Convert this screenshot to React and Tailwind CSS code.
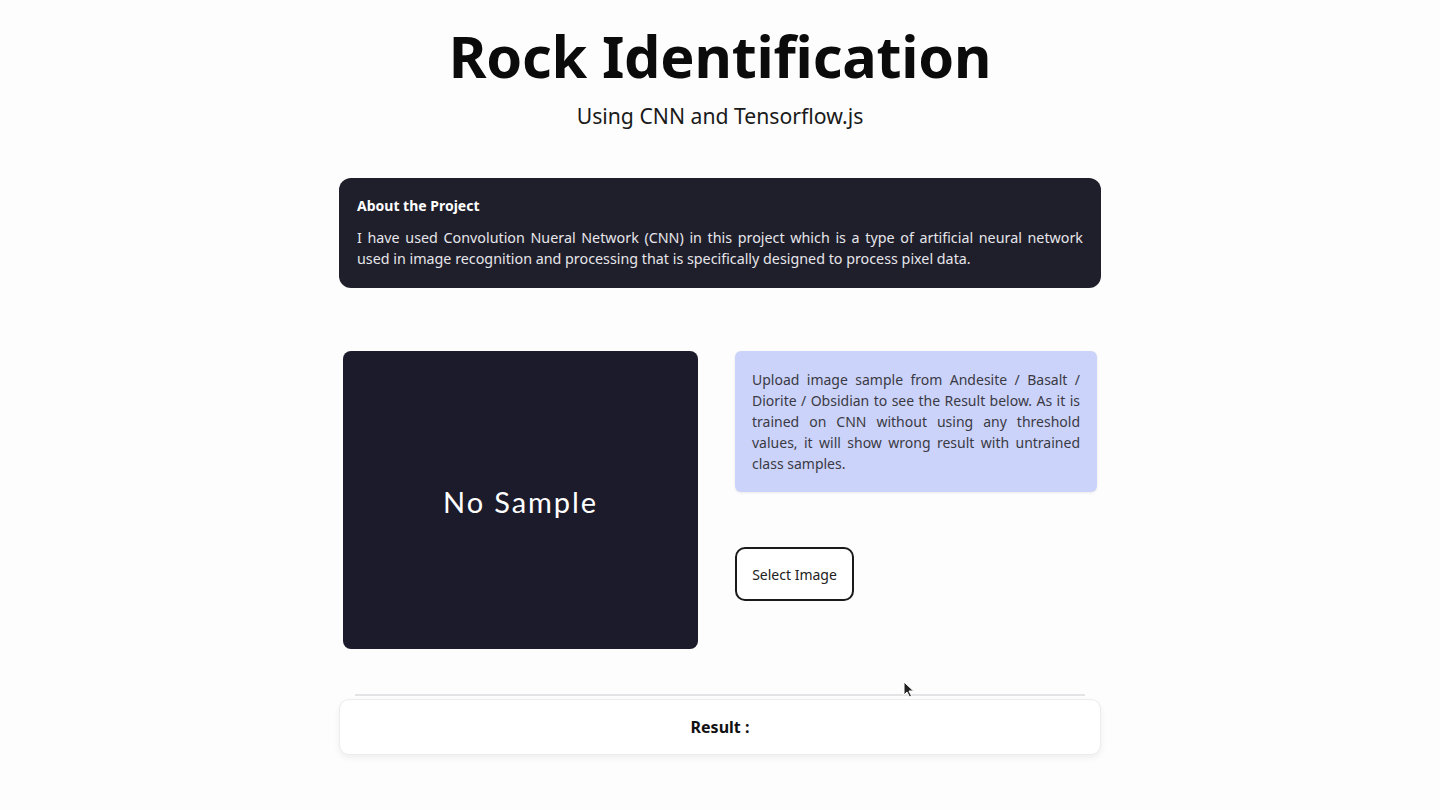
export default function App() {
  return (
    <div
      className="relative min-h-[810px] bg-[#fdfdfd] text-[#111]"
      style={{ fontFamily: '"Noto Sans", "Open Sans", sans-serif' }}
    >
      <header className="flex flex-col items-center pt-[18px]">
        <h1 className="text-[57.6px] font-bold leading-[76px] tracking-[-0.2px] text-[#0b0b0b]">Rock Identification</h1>
        <p className="mt-[8px] text-[21.2px] leading-[28px] text-[#1a1a1a]">Using CNN and Tensorflow.js</p>
      </header>

      <main className="mx-auto mt-[48px] w-[762px]">
        <section className="rounded-[12px] bg-[#1f1e2b] px-[18px] pb-[19px] pt-[17px] text-white">
          <h2 className="text-[14px] font-bold leading-[22px]">About the Project</h2>
          <p className="mt-[10px] text-justify text-[14.3px] leading-[21px] text-[#e6e6ea]">
            I have used Convolution Nueral Network (CNN) in this project which is a type of artificial neural network
            used in image recognition and processing that is specifically designed to process pixel data.
          </p>
        </section>

        <div className="mt-[63px] flex items-start px-[4px]">
          <div className="flex h-[298px] w-[355px] items-center justify-center rounded-[8px] bg-[#1c1b2b]">
            <span className="pt-[4px] text-[29px] tracking-[1.9px] text-white" style={{ fontFamily: 'Lato, sans-serif' }}>
              No Sample
            </span>
          </div>

          <div className="ml-[37px] w-[362px]">
            <div className="rounded-[6px] bg-[#ccd3fa] px-[17px] pb-[18px] pt-[18px] shadow-[0_1px_3px_rgba(0,0,0,0.08)]">
              <p className="text-justify text-[14px] leading-[21px] text-[#3a3a44]">
                Upload image sample from Andesite / Basalt / Diorite / Obsidian to see the Result below. As it is
                trained on CNN without using any threshold values, it will show wrong result with untrained class
                samples.
              </p>
            </div>
            <button className="mt-[55px] h-[54px] w-[119px] rounded-[10px] border-2 border-[#1a1a1a] bg-white text-[14px] text-[#222]">
              Select Image
            </button>
          </div>
        </div>

        <div className="mx-[16px] mt-[45px] h-[2px] bg-[#e4e4e6]" />

        <div className="mt-[3px] flex h-[56px] items-center justify-center rounded-[10px] border border-[#ececee] bg-white shadow-[0_3px_6px_rgba(0,0,0,0.06)]">
          <span className="text-[16px] font-bold text-[#111]">Result :</span>
        </div>
      </main>

      <svg className="absolute left-[903px] top-[681px]" width="12" height="18" viewBox="0 0 12 18">
        <path d="M1 1 L1 14 L4 11 L6.5 16 L8.5 15 L6 10 L10.5 10 Z" fill="#222" stroke="#fff" strokeWidth="1" />
      </svg>
    </div>
  )
}
